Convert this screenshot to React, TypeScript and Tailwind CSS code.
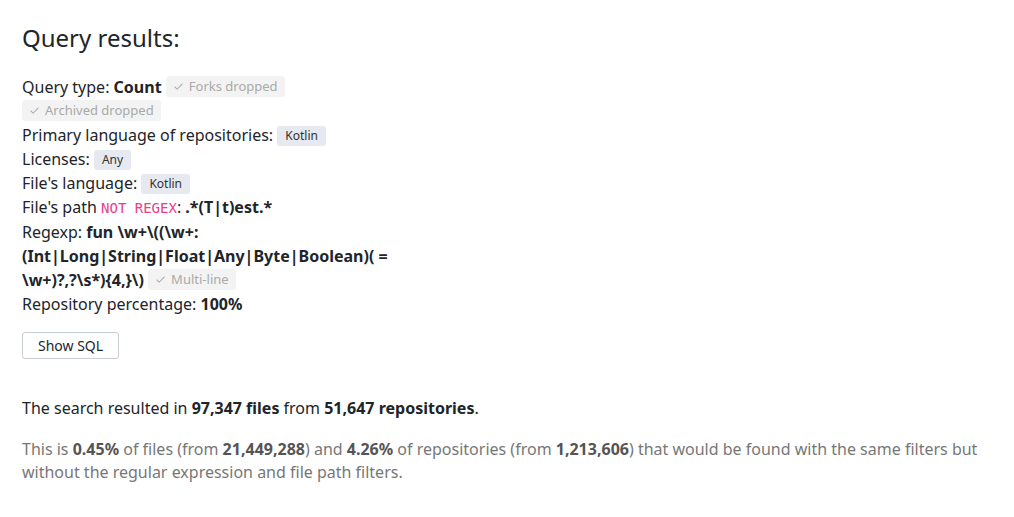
import React from 'react';

function Check() {
  return (
    <svg className="w-[11px] h-[11px] mr-[5px]" viewBox="0 0 12 12" fill="none" stroke="currentColor" strokeWidth={1.1}>
      <path d="M2 6.5l2.5 2.5L10 3.5" strokeLinecap="round" strokeLinejoin="round" />
    </svg>
  );
}

function Flag({ children }: { children: React.ReactNode }) {
  return (
    <span className="inline-flex items-center h-[21px] px-[7px] rounded-[3px] bg-[#f3f3f3] text-[#a9a9a9] text-[13px] align-[1px] whitespace-nowrap">
      <Check />
      {children}
    </span>
  );
}

function Tag({ children }: { children: React.ReactNode }) {
  return (
    <span className="inline-flex items-center h-[20px] px-[8px] rounded-[3px] bg-[#e6e9ef] text-[#333] text-[12px] align-[1px]">
      {children}
    </span>
  );
}

export default function App() {
  return (
    <div className="min-h-screen bg-white text-[#212529] font-['Noto_Sans',sans-serif] px-[22px] pt-[24px]">
      <h2 className="text-[24px] leading-[1.2] font-normal mb-[22px]">Query results:</h2>

      <div className="w-[372px] text-[16px] leading-[24px]">
        <div>
          Query type: <b>Count</b> <Flag>Forks dropped</Flag>{' '}
          <span className="inline-block leading-[20px] mt-[-2px]">
            <Flag>Archived dropped</Flag>
          </span>
        </div>
        <div>
          Primary language of repositories: <Tag>Kotlin</Tag>
        </div>
        <div>
          Licenses: <Tag>Any</Tag>
        </div>
        <div>
          File's language: <Tag>Kotlin</Tag>
        </div>
        <div>
          File's path{' '}
          <code className="font-['DejaVu_Sans_Mono',monospace] text-[14px] text-[#e83e8c]">NOT REGEX</code>:{' '}
          <b>.*(T|t)est.*</b>
        </div>
        <div>
          Regexp: <b>fun \w+\((\w+: (Int|Long|String|Float|Any|Byte|Boolean)( = \w+)?,?\s*){'{'}4,{'}'}\)</b>{' '}
          <Flag>Multi-line</Flag>
        </div>
        <div>
          Repository percentage: <b>100%</b>
        </div>
      </div>

      <button className="mt-[16px] h-[27px] px-[15px] border border-[#c9ced4] rounded-[3px] text-[14px] text-[#212529] bg-white">
        Show SQL
      </button>

      <p className="mt-[37px] text-[16px] leading-[24px]">
        The search resulted in <b>97,347 files</b> from <b>51,647 repositories</b>.
      </p>
      <p className="mt-[18px] text-[16px] leading-[23px] text-[#777] max-w-[970px]">
        This is <b className="text-[#555]">0.45%</b> of files (from <b className="text-[#555]">21,449,288</b>) and{' '}
        <b className="text-[#555]">4.26%</b> of repositories (from <b className="text-[#555]">1,213,606</b>) that would be
        found with the same filters but without the regular expression and file path filters.
      </p>
    </div>
  );
}
